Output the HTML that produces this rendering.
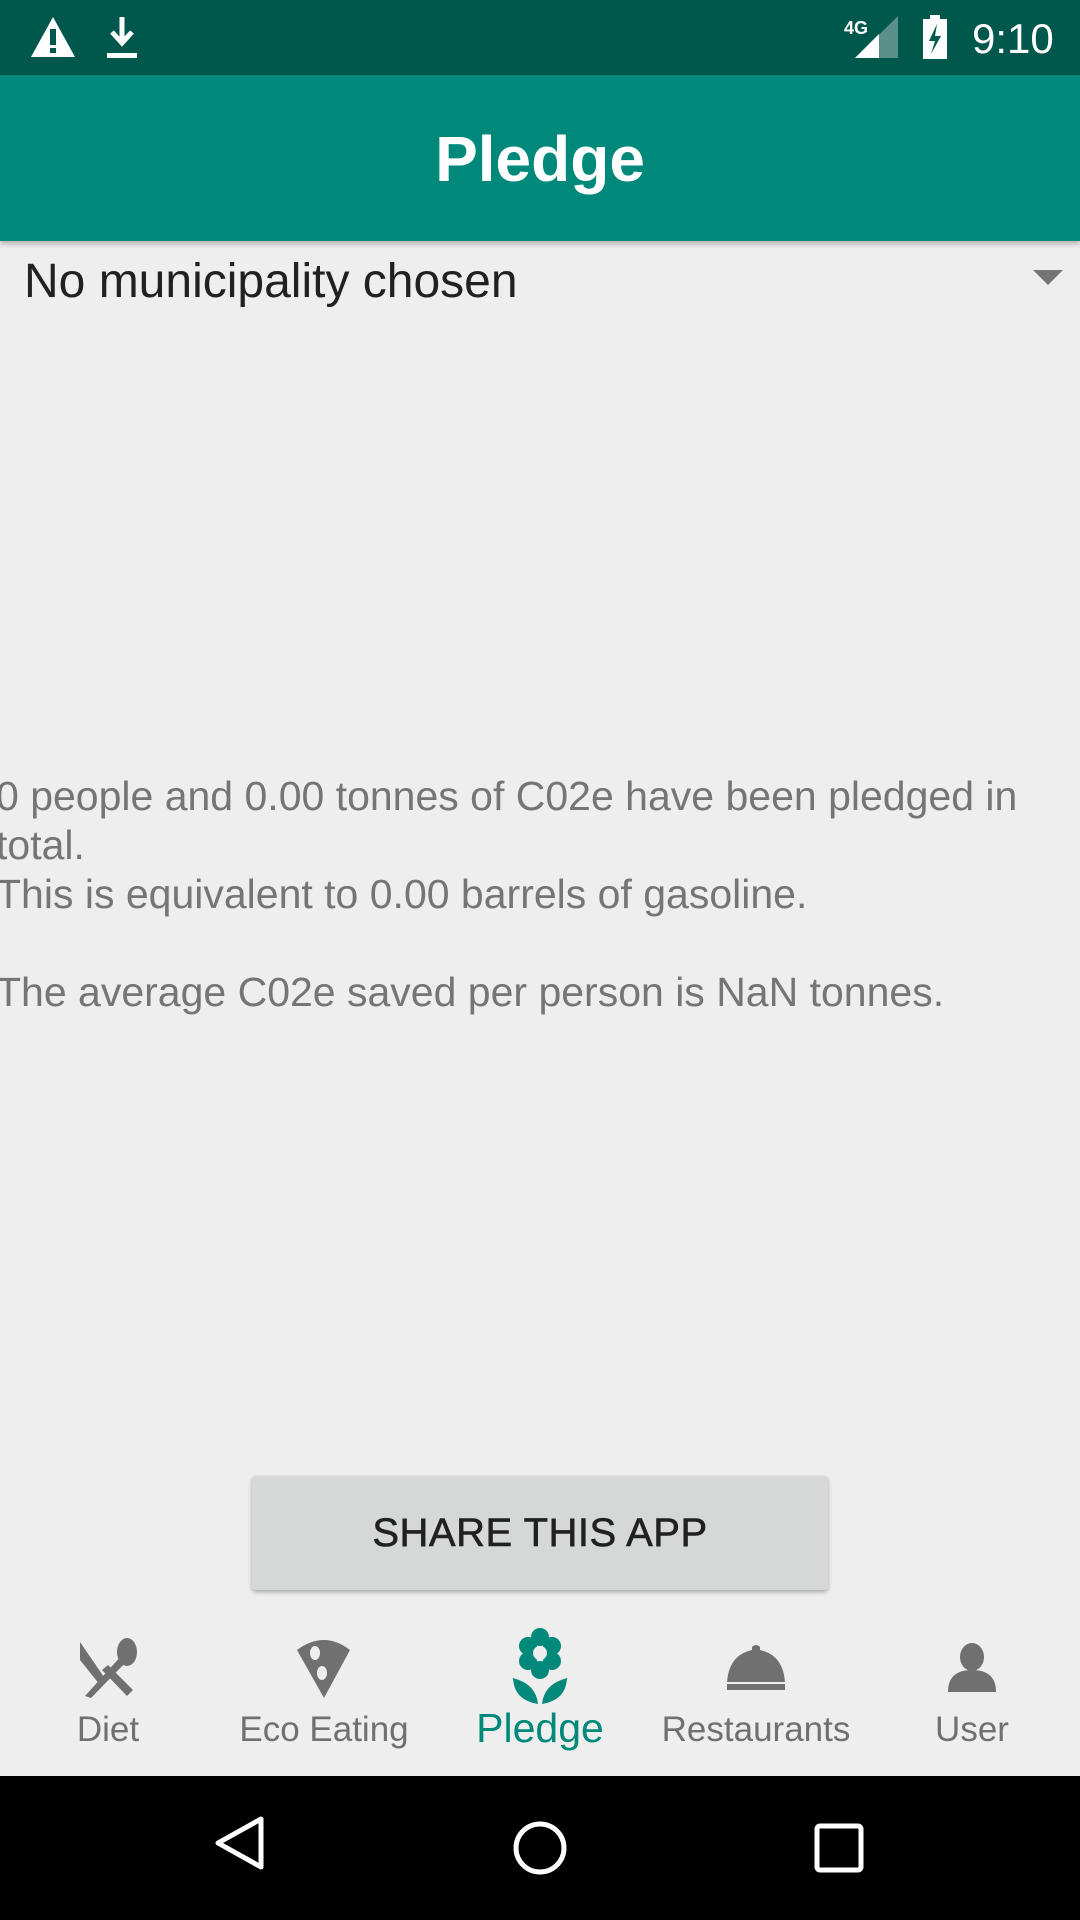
<!DOCTYPE html>
<html><head><style>
*{margin:0;padding:0;box-sizing:border-box}
body{width:1080px;height:1920px;background:#eeeeee;font-family:"Liberation Sans",sans-serif;position:relative;overflow:hidden}
.abs{position:absolute}
.txt{color:#757575;font-size:41px;left:-4px;white-space:nowrap}
.lab{position:absolute;top:1710px;width:216px;text-align:center;font-size:35px;color:#707070}
</style></head><body>
<div class="abs" style="left:0;top:0;width:1080px;height:75px;background:#00574b"></div>
<svg class="abs" style="left:0;top:0" width="1080" height="75">
<path d="M53 17 L75 57 L31 57 Z" fill="#fff"/><rect x="50" y="29" width="6" height="16" fill="#00574b"/><rect x="50" y="48" width="6" height="5" fill="#00574b"/>
<path d="M122 17 V40 M112 32 L122 43 L132 32" stroke="#fff" stroke-width="5" fill="none"/><rect x="107" y="53" width="30" height="5" fill="#fff"/>
<text x="844" y="34" fill="#fff" font-size="18" font-weight="bold" font-family="Liberation Sans">4G</text>
<path d="M855 58 L898 16 V58 Z" fill="#fff" opacity="0.35"/><path d="M855 58 L879 34 V58 Z" fill="#fff"/>
<rect x="923" y="19" width="24" height="40" fill="#fff"/><rect x="930" y="15" width="10" height="5" fill="#fff"/>
<path d="M937 24 L929 41 L935 41 L931 54 L941 36 L935 36 Z" fill="#00574b"/>
<text x="972" y="53" fill="#fff" font-size="42" font-family="Liberation Sans">9:10</text>
</svg>
<div class="abs" style="left:0;top:75px;width:1080px;height:166px;background:#00897b;box-shadow:0 3px 5px rgba(0,0,0,.25)"></div>
<div class="abs" style="left:0;top:122px;width:1080px;text-align:center;color:#fff;font-size:64px;font-weight:bold">Pledge</div>
<div class="abs" style="left:24px;top:254px;font-size:48px;color:#212121">No municipality chosen</div>
<svg class="abs" style="left:1033px;top:270px" width="30" height="16"><path d="M0 0 H30 L15 15 Z" fill="#757575"/></svg>
<div class="abs txt" style="top:773px">0 people and 0.00 tonnes of C02e have been pledged in</div>
<div class="abs txt" style="top:822px">total.</div>
<div class="abs txt" style="top:871px">This is equivalent to 0.00 barrels of gasoline.</div>
<div class="abs txt" style="top:969px">The average C02e saved per person is NaN tonnes.</div>
<div class="abs" style="left:252px;top:1476px;width:576px;height:114px;background:#d6d7d7;border-radius:4px;box-shadow:0 2px 4px rgba(0,0,0,.3);text-align:center;line-height:114px;font-size:40px;color:#212121;letter-spacing:0.5px;-webkit-text-stroke:0.6px #212121">SHARE THIS APP</div>
<svg class="abs" style="left:0;top:1600px" width="1080" height="176">
<g fill="#707070">
<path d="M80 42 L106 80 L100 85 L80 60 Z"/><path d="M85 96 L122 55 L128 60 L91 98 Z M133 90 L127 96 L102 70 L108 65 Z"/>
<ellipse cx="127" cy="52" rx="10" ry="14"/>
<path d="M297 50 Q324 30 350 50 L324 98 Z"/>
<path d="M727 82 Q729 55 752 50 L752 47 Q756 43 760 47 L760 50 Q783 55 785 82 Z"/><rect x="727" y="84" width="58" height="6"/>
<ellipse cx="972" cy="57" rx="12" ry="14"/><path d="M948 92 Q948 70 972 70 Q996 70 996 92 Z"/>
</g>
<g fill="#eeeeee"><ellipse cx="315" cy="53" rx="5" ry="7"/><ellipse cx="322" cy="73" rx="5" ry="7"/></g>
<g fill="#00897b">
<circle cx="540" cy="37" r="9"/><circle cx="540" cy="70" r="9"/><circle cx="528" cy="46" r="9"/><circle cx="552" cy="46" r="9"/><circle cx="528" cy="61" r="9"/><circle cx="552" cy="61" r="9"/>
<path d="M513 78 Q514 100 538 104 Q536 84 513 78 Z"/><path d="M567 78 Q566 100 542 104 Q544 84 567 78 Z"/>
</g>
<circle cx="540" cy="53" r="7" fill="#eeeeee"/>
</svg>
<div class="lab" style="left:0">Diet</div>
<div class="lab" style="left:216px">Eco Eating</div>
<div class="lab" style="left:432px;font-size:41px;top:1705px;color:#00897b">Pledge</div>
<div class="lab" style="left:648px">Restaurants</div>
<div class="lab" style="left:864px">User</div>
<div class="abs" style="left:0;top:1776px;width:1080px;height:144px;background:#000"></div>
<svg class="abs" style="left:0;top:1776px" width="1080" height="144">
<path d="M218 70 L261 46 V94 Z" stroke="#fff" stroke-width="5" fill="none" stroke-linejoin="round" transform="translate(0 -3)"/>
<circle cx="540" cy="72" r="24" stroke="#fff" stroke-width="5" fill="none"/>
<rect x="817" y="50" width="44" height="44" rx="3" stroke="#fff" stroke-width="5" fill="none"/>
</svg>
</body></html>
